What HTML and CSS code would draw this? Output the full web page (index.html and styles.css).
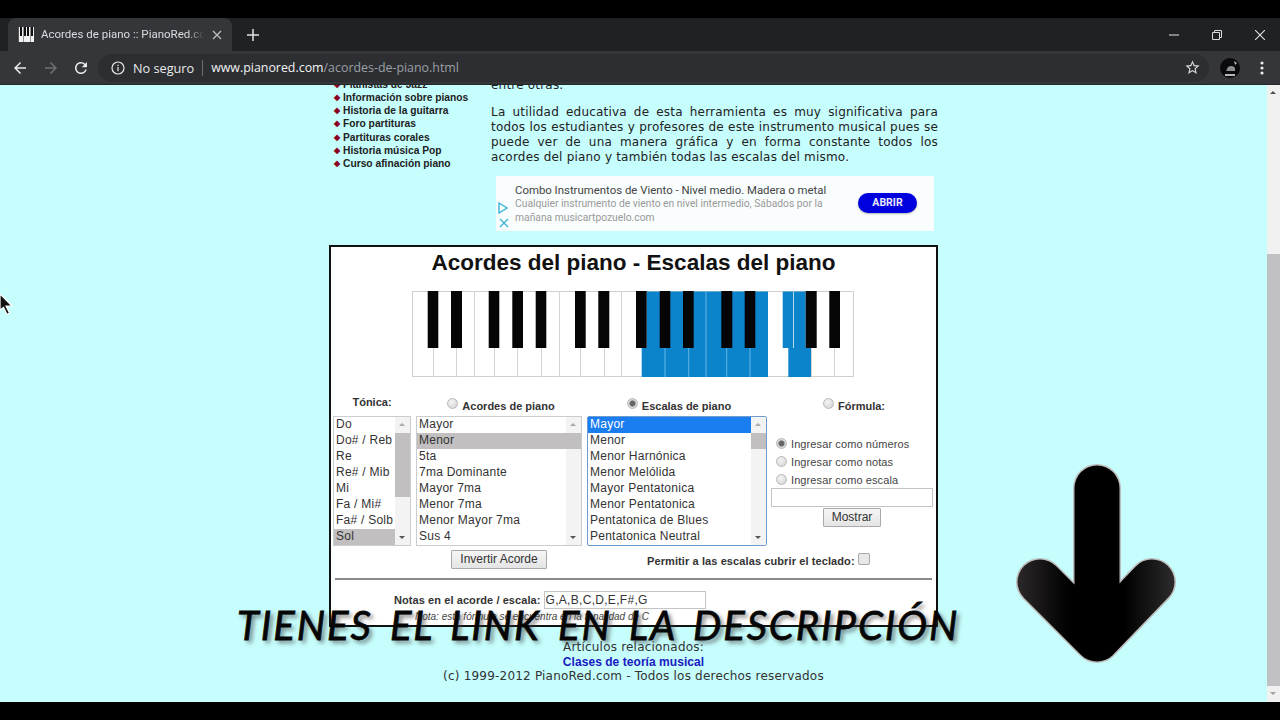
FILE: index.html
```html
<!DOCTYPE html>
<html lang="es">
<head>
    <meta charset="UTF-8">
    <title>Acordes de piano :: PianoRed.com</title>
    <link rel="stylesheet" href="styles.css">
</head>
<body>
    <div class="letterbox"></div>

    <div class="tabstrip">
        <div class="tab">
            <svg class="favicon" width="16" height="15" viewBox="0 0 16 15">
                <rect width="16" height="15" fill="#f2f2f2"/>
                <path d="M2 0h2v9H2zM6 0h2v9H6zM9 0h2v9H9zM13 0h2v9h-2z" fill="#111"/>
                <path d="M0 0h1v15H0zM5 0h.6v15H5zM12 0h.6v15H12z" fill="#555"/>
            </svg>
            <span class="tab-title">Acordes de piano :: PianoRed.com</span>
            <svg class="tab-close" width="10" height="10" viewBox="0 0 10 10"><path d="M1 1l8 8M9 1l-8 8" stroke="#b8babd" stroke-width="1.4"/></svg>
        </div>
        <svg class="new-tab" width="12" height="12" viewBox="0 0 12 12"><path d="M6 0v12M0 6h12" stroke="#e0e2e5" stroke-width="1.5"/></svg>
        <div class="window-controls">
            <svg width="10" height="10" viewBox="0 0 10 10"><path d="M0 5h10" stroke="#c4c6c9" stroke-width="1.2"/></svg>
            <svg width="10" height="10" viewBox="0 0 10 10"><path d="M.5 2.5h7v7h-7zM2.5 2.5v-2h7v7h-2" fill="none" stroke="#d8dadd"/></svg>
            <svg width="10" height="10" viewBox="0 0 10 10"><path d="M0 0l10 10M10 0L0 10" stroke="#e0e2e5" stroke-width="1.1"/></svg>
        </div>
    </div>

    <div class="toolbar">
        <svg class="nav-icon" width="18" height="18" viewBox="0 0 24 24"><path d="M20 11H7.83l5.59-5.59L12 4l-8 8 8 8 1.41-1.41L7.83 13H20v-2z" fill="#e8eaed"/></svg>
        <svg class="nav-icon" width="18" height="18" viewBox="0 0 24 24"><path d="M4 11h12.17l-5.59-5.59L12 4l8 8-8 8-1.41-1.41L16.17 13H4v-2z" fill="#6f7174"/></svg>
        <svg class="nav-icon reload" width="18" height="18" viewBox="0 0 24 24"><path d="M17.65 6.35A7.958 7.958 0 0 0 12 4c-4.42 0-7.99 3.58-7.99 8s3.57 8 7.99 8c3.73 0 6.84-2.55 7.73-6h-2.08A5.99 5.99 0 0 1 12 18c-3.31 0-6-2.69-6-6s2.69-6 6-6c1.66 0 3.14.69 4.22 1.78L13 11h7V4l-2.35 2.35z" fill="#e8eaed"/></svg>
        <div class="omnibox">
            <svg width="14" height="14" viewBox="0 0 14 14"><circle cx="7" cy="7" r="6" fill="none" stroke="#e8eaed" stroke-width="1.2"/><path d="M6.4 6h1.2v4.2H6.4zM6.4 3.7h1.2v1.2H6.4z" fill="#e8eaed"/></svg>
            <span class="security">No seguro</span>
            <span class="omni-sep"></span>
            <span class="url"><b>www.pianored.com</b>/acordes-de-piano.html</span>
            <svg class="star" width="17" height="17" viewBox="0 0 24 24"><path d="M22 9.24l-7.19-.62L12 2 9.19 8.63 2 9.24l5.46 4.73L5.82 21 12 17.27 18.18 21l-1.63-7.03L22 9.24zM12 15.4l-3.76 2.27 1-4.28-3.32-2.88 4.38-.38L12 6.1l1.71 4.04 4.38.38-3.32 2.88 1 4.28L12 15.4z" fill="#d5d7da"/></svg>
        </div>
        <svg class="avatar" width="20" height="20" viewBox="0 0 20 20">
            <circle cx="10" cy="10" r="10" fill="#0b0b0d"/>
            <path d="M8 9c3-2 6-1 7 1v3H6z" fill="#8c8f92"/>
            <path d="M5 16h10v2H5zM14 3l3 2-2 2z" fill="#b5b7ba"/>
        </svg>
        <svg class="menu-dots" width="4" height="14" viewBox="0 0 4 14"><circle cx="2" cy="2" r="1.6" fill="#e8eaed"/><circle cx="2" cy="7" r="1.6" fill="#e8eaed"/><circle cx="2" cy="12" r="1.6" fill="#e8eaed"/></svg>
    </div>

    <div class="viewport">
        <div class="page-scroll">
            <div class="page">
                <div class="top-row">
                    <ul class="side-links">
                        <li>Pianistas de Jazz</li>
                        <li>Información sobre pianos</li>
                        <li>Historia de la guitarra</li>
                        <li>Foro partituras</li>
                        <li>Partituras corales</li>
                        <li>Historia música Pop</li>
                        <li>Curso afinación piano</li>
                    </ul>
                    <div class="article">
                        <p class="article-tail">entre otras.</p>
                        <p class="article-text">La utilidad educativa de esta herramienta es muy significativa para todos los estudiantes y profesores de este instrumento musical pues se puede ver de una manera gráfica y en forma constante todos los acordes del piano y también todas las escalas del mismo.</p>
                        <div class="ad">
                            <div class="ad-icons">
                                <svg width="12" height="12" viewBox="0 0 12 12"><path d="M2 1l8 5-8 5z" fill="none" stroke="#35b5d8" stroke-width="1.4"/></svg>
                                <svg width="10" height="10" viewBox="0 0 10 10"><path d="M1 1l8 8M9 1l-8 8" stroke="#35b5d8" stroke-width="1.3"/></svg>
                            </div>
                            <div class="ad-copy">
                                <div class="ad-title">Combo Instrumentos de Viento - Nivel medio. Madera o metal</div>
                                <div class="ad-desc">Cualquier instrumento de viento en nivel intermedio, Sábados por la mañana musicartpozuelo.com</div>
                            </div>
                            <div class="ad-button">ABRIR</div>
                        </div>
                    </div>
                </div>

                <div class="widget">
                    <h1 class="widget-title">Acordes del piano - Escalas del piano</h1>
                    <svg class="keyboard" width="442" height="87" viewBox="412 291 442 87">
                        <rect x="412.5" y="291.5" width="441" height="85" fill="#fff" stroke="#cfcfcf"/>
                        <path d="M433.5 348v29M456.5 348v29M474.5 291v86M494.5 348v29M517.5 348v29M541.5 348v29M559.5 291v86M580.5 348v29M604.5 348v29M621.5 291v86M811.5 348v29M834.5 348v29" stroke="#d4d4d4"/>
                        <path d="M641.7 348H646.7V291.5H768V377H641.7zM788.3 348H794V291.5H805.7V348H811V377H788.3z" fill="#0b84cb"/>
                        <rect x="782.7" y="291.5" width="10.6" height="56.5" fill="#0b84cb"/>
                        <path d="M665 348v29M688.7 348v29M706 291v86M726.7 348v29M750 348v29" stroke="#62b6e6"/>
                        <path d="M427.7 291h10.6v57h-10.6zM451 291h11v57h-11zM488.7 291h10.6v57h-10.6zM512.3 291h10.7v57h-10.7zM535.7 291h10.6v57h-10.6zM575 291h10.7v57H575zM598.3 291h11v57h-11zM636 291h10.7v57H636zM659.7 291h10.6v57h-10.6zM683 291h10.7v57H683zM721.3 291h11v57h-11zM744.7 291h10.6v57h-10.6zM805.7 291h11v57h-11zM829.3 291h10.7v57h-10.7z" fill="#050505"/>
                    </svg>

                    <div class="controls">
                        <div class="col-head tonica">Tónica:</div>
                        <label class="col-head"><input type="radio" name="mode" class="radio">Acordes de piano</label>
                        <label class="col-head"><input type="radio" name="mode" class="radio" checked>Escalas de piano</label>
                        <label class="col-head formula-head"><input type="radio" name="mode" class="radio">Fórmula:</label>

                        <div class="list">
                            <div class="list-items">
                                <div>Do</div><div>Do# / Reb</div><div>Re</div><div>Re# / Mib</div><div>Mi</div><div>Fa / Mi#</div><div>Fa# / Solb</div><div class="picked">Sol</div>
                            </div>
                            <div class="list-bar"><span class="up"></span><span class="thumb thumb-long"></span><span class="down"></span></div>
                        </div>
                        <div class="list">
                            <div class="list-items">
                                <div>Mayor</div><div class="picked">Menor</div><div>5ta</div><div>7ma Dominante</div><div>Mayor 7ma</div><div>Menor 7ma</div><div>Menor Mayor 7ma</div><div>Sus 4</div>
                            </div>
                            <div class="list-bar"><span class="up"></span><span class="thumb"></span><span class="down"></span></div>
                        </div>
                        <div class="list list-focus">
                            <div class="list-items">
                                <div class="active">Mayor</div><div>Menor</div><div>Menor Harnónica</div><div>Menor Melólida</div><div>Mayor Pentatonica</div><div>Menor Pentatonica</div><div>Pentatonica de Blues</div><div>Pentatonica Neutral</div>
                            </div>
                            <div class="list-bar"><span class="up"></span><span class="thumb"></span><span class="down"></span></div>
                        </div>
                        <div class="formula">
                            <label class="formula-opt"><input type="radio" name="entry" class="radio" checked>Ingresar como números</label>
                            <label class="formula-opt"><input type="radio" name="entry" class="radio">Ingresar como notas</label>
                            <label class="formula-opt"><input type="radio" name="entry" class="radio">Ingresar como escala</label>
                            <input type="text" class="field formula-field">
                            <button class="btn">Mostrar</button>
                        </div>

                        <div class="invert"><button class="btn">Invertir Acorde</button></div>
                        <label class="cover"><span>Permitir a las escalas cubrir el teclado:</span><input type="checkbox" class="check"></label>
                    </div>

                    <div class="divider"></div>
                    <div class="notes">
                        <span>Notas en el acorde / escala:</span>
                        <input type="text" class="field notes-field" value="G,A,B,C,D,E,F#,G">
                    </div>
                    <div class="notes-hint">Nota: esta fórmula se encuentra en la tonalidad de C</div>
                </div>

                <div class="page-footer">
                    <div>Artículos relacionados:</div>
                    <div class="footer-link">Clases de teoría musical</div>
                    <div>(c) 1999-2012 PianoRed.com - Todos los derechos reservados</div>
                </div>
            </div>
        </div>

        <div class="scrollbar">
            <span class="sb-btn sb-up"></span>
            <div class="sb-track"><div class="sb-thumb"></div></div>
            <span class="sb-btn sb-down"></span>
        </div>

        <!-- video overlays -->
        <svg class="cursor" width="14" height="22" viewBox="0 0 14 22"><path d="M0 0l12 12H6l3.5 7-2.5 1.5-3.5-7L0 16z" fill="#111" stroke="#fff" stroke-width="1.2"/></svg>
        <div class="caption">TIENES EL LINK EN LA DESCRIPCIÓN</div>
        <svg class="big-arrow" width="170" height="210" viewBox="1012 460 170 210">
            <defs>
                <linearGradient id="arrowFill" gradientUnits="userSpaceOnUse" x1="1017" y1="0" x2="1176" y2="0">
                    <stop offset="0" stop-color="#2c282a"/>
                    <stop offset="0.33" stop-color="#000"/>
                    <stop offset="0.67" stop-color="#000"/>
                    <stop offset="1" stop-color="#2e2c2e"/>
                </linearGradient>
            </defs>
            <path d="M1097 488V639M1040 582L1097 639L1152 582" fill="none" stroke="#bdbdbd" stroke-width="48" stroke-linecap="round" stroke-linejoin="round"/>
            <path d="M1097 488V639M1040 582L1097 639L1152 582" fill="none" stroke="url(#arrowFill)" stroke-width="45" stroke-linecap="round" stroke-linejoin="round"/>
        </svg>
    </div>

    <div class="letterbox"></div>
</body>
</html>
```

FILE: styles.css
```css
* {
    box-sizing: border-box;
}
html, body {
    height: 100%;
}
body {
    margin: 0;
    display: flex;
    flex-direction: column;
    overflow: hidden;
    background-color: #000;
    font-family: "Liberation Sans", Arial, sans-serif;
}
.letterbox {
    height: 18px;
    flex: none;
    background-color: #000;
}

/* browser chrome */
.tabstrip {
    height: 33px;
    flex: none;
    display: flex;
    align-items: center;
    padding-left: 8px;
    background-color: #202124;
}
.tab {
    width: 224px;
    height: 33px;
    display: flex;
    align-items: center;
    padding: 0 10px;
    border-radius: 8px 8px 0 0;
    background-color: #35363a;
}
.favicon {
    flex: none;
}
.tab-title {
    width: 164px;
    margin: -2px 0 0 7px;
    overflow: hidden;
    white-space: nowrap;
    font-family: Roboto, sans-serif;
    font-size: 11.5px;
    color: #dadce0;
    -webkit-mask-image: linear-gradient(to right, #000 90%, transparent);
    mask-image: linear-gradient(to right, #000 90%, transparent);
}
.tab-close {
    margin-left: 8px;
    flex: none;
}
.new-tab {
    margin-left: 15px;
}
.window-controls {
    margin-left: auto;
    display: flex;
    gap: 33px;
    padding-right: 15px;
}
.toolbar {
    height: 34px;
    flex: none;
    display: flex;
    align-items: center;
    padding-left: 11px;
    border-bottom: 1px solid #26272a;
    background-color: #35363a;
}
.nav-icon {
    flex: none;
    margin-right: 13px;
}
.nav-icon.reload {
    margin-left: -1px;
}
.omnibox {
    width: 1111px;
    height: 28px;
    flex: none;
    margin-left: -5px;
    display: flex;
    align-items: center;
    padding: 0 8px 0 13px;
    border-radius: 14px;
    background-color: #2d2e31;
}
.security {
    margin-left: 8px;
    font-family: "Open Sans", sans-serif;
    font-size: 12.7px;
    color: #e8eaed;
}
.omni-sep {
    width: 1px;
    height: 16px;
    margin: 0 8px;
    background-color: #6b6d70;
}
.url {
    font-family: "Open Sans", sans-serif;
    font-size: 12.4px;
    color: #9aa0a6;
}
.url b {
    font-weight: 400;
    color: #f1f3f4;
}
.star {
    margin-left: auto;
}
.avatar {
    margin-left: 11px;
    flex: none;
}
.menu-dots {
    margin-left: 20px;
    flex: none;
}

/* page */
.viewport {
    flex: 1;
    min-height: 0;
    position: relative;
    display: flex;
    overflow: hidden;
    background-color: #c6fdfd;
}
.page-scroll {
    flex: 1;
    overflow: hidden;
}
.page {
    width: 609px;
    margin: -7px auto 0;
}
.top-row {
    display: flex;
}
.side-links {
    width: 162px;
    flex: none;
    margin: 0;
    padding: 0 0 0 5px;
    list-style: none;
    font-size: 10.25px;
    font-weight: bold;
    line-height: 13.15px;
    color: #222;
}
.side-links li::before {
    content: "\25C6";
    display: inline-block;
    width: 9px;
    font-size: 8px;
    vertical-align: 1px;
    color: #8b0020;
}
.article {
    flex: 1;
    font-family: "DejaVu Sans", Verdana, sans-serif;
    font-size: 12px;
    line-height: 15px;
    letter-spacing: 0.2px;
    color: #222;
}
.article-tail {
    margin: 0 0 12px;
}
.article-text {
    margin: 0 0 11px;
    text-align: justify;
}
.ad {
    width: 438px;
    height: 55px;
    margin-left: 5px;
    display: flex;
    letter-spacing: 0;
    background-color: #f9fdfd;
}
.ad-icons {
    width: 19px;
    flex: none;
    display: flex;
    flex-direction: column;
    align-items: flex-end;
    justify-content: flex-end;
    gap: 4px;
    padding: 0 6px 3px 0;
}
.ad-copy {
    width: 320px;
    flex: none;
    padding-top: 7px;
    font-family: Roboto, sans-serif;
}
.ad-title {
    font-size: 11.4px;
    line-height: 14px;
    color: #444;
}
.ad-desc {
    width: 316px;
    font-size: 10.3px;
    line-height: 14px;
    color: #999;
}
.ad-button {
    width: 59px;
    height: 20px;
    margin: 17px 0 0 23px;
    flex: none;
    border-radius: 10px;
    box-shadow: 0 1px 2px rgba(0, 0, 0, 0.3);
    background-color: #0000de;
    font-family: Roboto, sans-serif;
    font-size: 10.5px;
    font-weight: bold;
    line-height: 19px;
    text-align: center;
    color: #e8e8ff;
}

/* chord widget */
.widget {
    height: 382px;
    margin-top: 14px;
    padding: 3px 2px 0;
    border: 2px solid #111;
    background-color: #fff;
}
.widget-title {
    margin: 0;
    font-size: 22.5px;
    font-weight: bold;
    line-height: 26px;
    text-align: center;
    color: #111;
}
.keyboard {
    display: block;
    margin: 15px 0 0 79px;
}
.controls {
    display: grid;
    grid-template-columns: 78px 166px 180px 162px;
    grid-template-rows: 20px 130px auto;
    column-gap: 5px;
    margin: 18px 0 0;
    font-size: 11px;
    color: #333;
}
.col-head {
    display: flex;
    align-items: flex-end;
    justify-content: center;
    padding: 0 0 4px 4px;
    font-weight: bold;
}
.tonica {
    padding: 0 0 8px;
}
.formula-head {
    margin-left: -2px;
}
.radio {
    appearance: none;
    width: 11px;
    height: 11px;
    margin: 0 4px 3px 0;
    flex: none;
    border: 1px solid #b9b9b9;
    border-radius: 50%;
    background: radial-gradient(circle at 40% 35%, #f4f4f4, #cfcfcf);
}
.radio:checked {
    background: radial-gradient(circle, #666 0 2.5px, #d8d8d8 3.5px);
}
.list {
    display: flex;
    border: 1px solid #c9cdd0;
    font-size: 12px;
    letter-spacing: 0.25px;
    line-height: 14px;
    color: #333;
}
.list-focus {
    border-color: #6c9bd0;
    border-radius: 2px;
}
.list-items {
    flex: 1;
    min-width: 0;
    white-space: nowrap;
}
.list-items div {
    height: 16px;
    padding-left: 2px;
}
.list-items .picked {
    background-color: #c1bfbf;
}
.list-items .active {
    background-color: #1a7df0;
    color: #fff;
}
.list-bar {
    width: 15px;
    flex: none;
    display: flex;
    flex-direction: column;
    align-items: center;
    background-color: #f3f3f3;
}
.list-bar .up,
.list-bar .down {
    height: 16px;
    width: 15px;
    flex: none;
    position: relative;
}
.list-bar .down {
    margin-top: auto;
}
.list-bar .up::before,
.list-bar .down::before {
    content: "";
    position: absolute;
    left: 4px;
    border: 3.5px solid transparent;
}
.list-bar .up::before {
    top: 3px;
    border-bottom-color: #a8a8a8;
}
.list-bar .down::before {
    top: 7px;
    border-top-color: #555;
}
.thumb {
    width: 100%;
    height: 16px;
    background-color: #c1bfbf;
}
.thumb-long {
    height: 64px;
}
.formula {
    display: flex;
    flex-direction: column;
    margin-left: -1px;
    padding-top: 19px;
}
.formula-opt {
    display: flex;
    align-items: center;
    height: 18px;
    padding-left: 5px;
    color: #444;
    letter-spacing: 0.1px;
}
.formula-opt .radio {
    margin-bottom: 2px;
}
.field {
    border: 1px solid #c4c4c4;
    background-color: #fff;
    padding: 0 1px;
    font-family: "Liberation Sans", Arial, sans-serif;
    font-size: 12px;
    color: #333;
}
.formula-field {
    width: 162px;
    height: 19px;
    flex: none;
    margin-top: -1px;
}
.btn {
    height: 19px;
    padding: 0 6px;
    border: 1px solid #a9a9a9;
    border-radius: 1px;
    background: linear-gradient(#f6f6f6, #e4e4e4);
    font-family: "Liberation Sans", Arial, sans-serif;
    font-size: 12px;
    line-height: 15px;
    color: #333;
}
.formula .btn {
    width: 58px;
    flex: none;
    margin: 1px 0 0 52px;
}
.invert {
    grid-column: 1 / 3;
    padding: 4px 0 0 118px;
}
.invert .btn {
    width: 96px;
}
.cover {
    grid-column: 3 / 5;
    display: flex;
    align-items: center;
    padding: 6px 0 0 60px;
    font-weight: bold;
    letter-spacing: 0.1px;
}
.check {
    appearance: none;
    width: 12px;
    height: 12px;
    margin: 0 0 4px 3px;
    border: 1px solid #aaa;
    border-radius: 2px;
    background-color: #e8e8e8;
}
.divider {
    height: 2px;
    margin: 9px 2px 0;
    background-color: #8a8a8a;
}
.notes {
    display: flex;
    align-items: center;
    justify-content: flex-start;
    margin-top: 11px;
    padding-left: 61px;
    font-size: 11px;
    font-weight: bold;
    letter-spacing: 0.08px;
    color: #333;
}
.notes-field {
    width: 162px;
    height: 18px;
    margin-left: 3px;
    font-size: 12px;
    font-weight: normal;
    letter-spacing: 0.3px;
}
.notes-hint {
    margin-top: 2px;
    padding-left: 82px;
    font-size: 10px;
    font-style: italic;
    line-height: 12px;
    color: #444;
}
.page-footer {
    margin-top: 13px;
    font-family: "DejaVu Sans", Verdana, sans-serif;
    font-size: 12px;
    line-height: 14.5px;
    letter-spacing: 0.2px;
    text-align: center;
    color: #333;
}
.footer-link {
    font-family: "Liberation Sans", Arial, sans-serif;
    font-weight: bold;
    letter-spacing: 0.05px;
    color: #1a1ac0;
}

/* page scrollbar */
.scrollbar {
    width: 13px;
    flex: none;
    display: flex;
    flex-direction: column;
    background-color: #f1f1f1;
}
.sb-btn {
    height: 16px;
    flex: none;
    position: relative;
}
.sb-btn::before {
    content: "";
    position: absolute;
    left: 3px;
    border: 3.5px solid transparent;
}
.sb-up::before {
    top: 3px;
    border-bottom-color: #505050;
}
.sb-down::before {
    top: 6px;
    border-top-color: #a0a0a0;
}
.sb-track {
    flex: 1;
    padding-top: 153px;
}
.sb-thumb {
    height: 100%;
    background-color: #c1c1c5;
}

/* things lying over the video frame */
.cursor {
    position: absolute;
    left: 0;
    top: 209px;
}
.caption {
    position: absolute;
    left: 237px;
    top: 516px;
    white-space: nowrap;
    font-family: Lato, sans-serif;
    font-size: 40px;
    font-style: italic;
    font-weight: 400;
    letter-spacing: 1.9px;
    word-spacing: 6px;
    color: #060606;
    -webkit-text-stroke: 0.8px #060606;
    text-shadow: 3px 3px 4px rgba(70, 70, 70, 0.7);
}
.big-arrow {
    position: absolute;
    left: 1012px;
    top: 375px;
}
```
